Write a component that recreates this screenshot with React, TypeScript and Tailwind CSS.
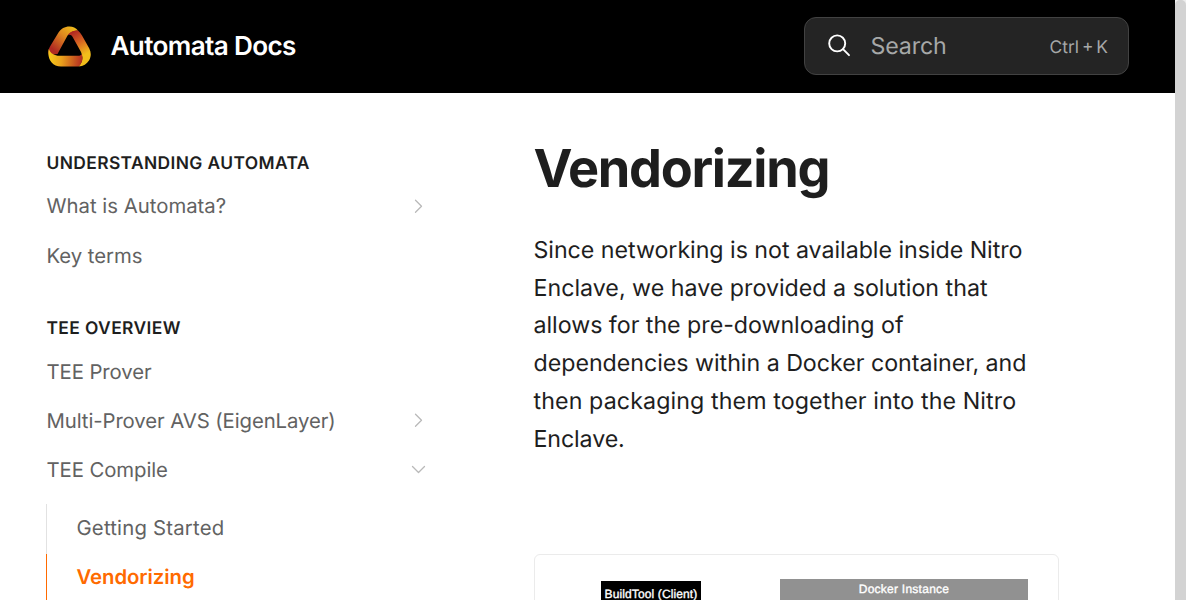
import React from "react";

function Logo() {
  return (
    <svg className="mb-px ml-[0.500px] h-[44px] w-[44px] shrink-0" viewBox="0 0 44 44" fill="none">
      <defs>
        <linearGradient id="left" x1="26" y1="4" x2="7" y2="26" gradientUnits="userSpaceOnUse">
          <stop offset="0" stopColor="#edb81b" />
          <stop offset="0.4" stopColor="#e08a1f" />
          <stop offset="1" stopColor="#b02a22" />
        </linearGradient>
        <linearGradient id="right" x1="26" y1="8" x2="39" y2="30" gradientUnits="userSpaceOnUse">
          <stop offset="0" stopColor="#b02722" />
          <stop offset="0.45" stopColor="#d56122" />
          <stop offset="1" stopColor="#f2bd1b" />
        </linearGradient>
        <linearGradient id="bottom" x1="3" y1="33" x2="36" y2="36" gradientUnits="userSpaceOnUse">
          <stop offset="0" stopColor="#f5c61a" />
          <stop offset="0.35" stopColor="#eaa11c" />
          <stop offset="1" stopColor="#b12721" />
        </linearGradient>
      </defs>
      <path d="M22.500 2.500C17.500 2.500 14 4.700 11.500 8.500L3 22.500C1.300 25.500 1 28 1.800 31L10.500 30L20 12.500C22 9.300 25 7.200 31 6.500C28.800 3.800 26 2.500 22.500 2.500Z" fill="url(#left)" />
      <path d="M31 6.500C25.500 6.500 22.500 8.500 20.800 11.200C23 10 24.500 11 25.500 12.800L34 28C36.300 33 35.800 38.500 31.500 42.500C36.500 42.200 39.800 40 42 36.500C44.300 32.500 44.300 28.500 42.300 24.500L35 11.500C33.800 9.500 32.500 7.800 31 6.500Z" fill="url(#right)" />
      <path d="M1.800 25C-0.200 34 4.500 42.500 14 42.500H31.500C35 39.500 36.500 35 34.700 30C34 31.300 32.700 31.800 31 31.800H12.500C7.500 31.800 3.500 29.500 1.800 25Z" fill="url(#bottom)" />
    </svg>
  );
}

function Chevron({ down = false }: { down?: boolean }) {
  return (
    <svg className="h-[16px] w-[16px] shrink-0" viewBox="0 0 16 16" fill="none" stroke="#b9b9b9" strokeWidth="1.3" strokeLinecap="round" strokeLinejoin="round">
      <path d={down ? "M1.500 4.500L7.500 10.500L13.500 4.500" : "M4.500 1.200L10.500 7.200L4.500 13.200"} />
    </svg>
  );
}

function NavItem({ label, arrow, className = "" }: { label: string; arrow?: "right" | "down"; className?: string }) {
  return (
    <a className="flex h-[49.200px] items-center justify-between text-[20.330px] text-[#626262]">
      <span className={className}>{label}</span>
      {arrow && <Chevron down={arrow === "down"} />}
    </a>
  );
}

function GroupTitle({ children }: { children: React.ReactNode }) {
  return (
    <h2 className="flex h-[38px] items-center text-[17.420px] font-semibold tracking-[0.022em] text-[#1e1e1e]">
      {children}
    </h2>
  );
}

function Sidebar() {
  return (
    <aside className="w-[380px] shrink-0 pt-[52px]">
      <GroupTitle>UNDERSTANDING AUTOMATA</GroupTitle>
      <div className="-mt-px">
        <NavItem label="What is Automata?" arrow="right" />
        <NavItem label="Key terms" className="tracking-[-0.040px]" />
      </div>
      <div className="pt-[30px]">
        <GroupTitle>TEE OVERVIEW</GroupTitle>
        <div className="-mt-px">
          <NavItem label="TEE Prover" className="tracking-[-0.080px]" />
          <NavItem label="Multi-Prover AVS (EigenLayer)" arrow="right" className="tracking-[-0.090px]" />
          <NavItem label="TEE Compile" arrow="down" className="tracking-[-0.080px]" />
        </div>
      </div>
      <div className="-ml-[0.500px] mt-[9px] text-[20.330px]">
        <a className="flex h-[50px] items-center border-l border-[#e2e2e2] pb-[2px] pl-[29.500px] tracking-[0.200px] text-[#626262]">Getting Started</a>
        <a className="flex h-[49px] items-center border-l border-[#ff6a00] pb-[2px] pl-[29.500px] font-semibold tracking-[-0.060px] text-[#ff6a00]">Vendorizing</a>
      </div>
    </aside>
  );
}

export default function App() {
  return (
    <div className="flex h-[600px] w-[1186px] overflow-hidden bg-white font-['Inter',sans-serif] [text-rendering:geometricPrecision]">
      <div className="flex min-w-0 flex-1 flex-col">
        <header className="flex h-[93px] shrink-0 items-center justify-between bg-black pr-[46px] pl-[46.500px]">
          <div className="flex items-center gap-[19.500px]">
            <Logo />
            <span className="text-[26.140px] font-semibold tracking-[-0.025em] text-white">Automata Docs</span>
          </div>
          <div className="mb-px flex h-[58px] w-[325px] items-center rounded-[12px] border border-[#424242] bg-[#242424] px-[20px] text-[#a6a8a8]">
            <svg className="h-[28px] w-[28px]" viewBox="0 0 28 28" fill="none" stroke="white" strokeWidth="1.9" strokeLinecap="round">
              <circle cx="12.200" cy="11.400" r="8" />
              <path d="M18 17.200L24 23.200" />
            </svg>
            <span className="ml-[17.500px] flex-1 text-[23.230px] tracking-[-0.150px]">Search</span>
            <span className="pt-[4px] text-[17.420px] [word-spacing:-2px]">Ctrl + K</span>
          </div>
        </header>
        <div className="flex min-h-0 flex-1 overflow-hidden pl-[46.500px]">
          <Sidebar />
          <main className="ml-[107px] w-[525px] shrink-0 pt-[45px]">
            <h1 className="text-[52.270px] leading-[60px] font-bold tracking-[-0.025em] text-[#1e1e1e]">Vendorizing</h1>
            <p className="mt-[32.880px] text-[23.230px] leading-[37.750px] text-[#1e1e1e]">
              <span className="tracking-[-0.040px]">Since networking is not available inside Nitro</span><br />
              Enclave, we have provided a solution that<br />
              <span className="tracking-[-0.030px]">allows for the pre-downloading of</span><br />
              <span className="tracking-[-0.030px]">dependencies within a Docker container, and</span><br />
              <span className="tracking-[0.100px]">then packaging them together into the Nitro</span><br />
              <span className="tracking-[-0.120px]">Enclave.</span>
            </p>
            <div className="mt-[96.620px] ml-[0.500px] flex h-[120px] items-start rounded-[6px] border border-[#ebebeb] pt-[24px] pl-[66px] font-['Liberation_Sans',sans-serif] text-[12px] whitespace-nowrap text-white [-webkit-text-stroke:0.350px_white]">
              <div className="mt-[2px] flex h-[60px] w-[100px] justify-center bg-black pt-[6px] leading-[15px] tracking-[0.120px]">BuildTool (Client)</div>
              <div className="ml-[79px] flex h-[60px] w-[248px] justify-center bg-[#919191] pt-[3px] leading-[14px] tracking-[0.250px]">Docker Instance</div>
            </div>
          </main>
        </div>
      </div>
      <div className="w-[11px] shrink-0 bg-[#eeeeee]">
        <div className="h-full rounded-t-[5px] bg-[#d3d3d3]" />
      </div>
    </div>
  );
}
